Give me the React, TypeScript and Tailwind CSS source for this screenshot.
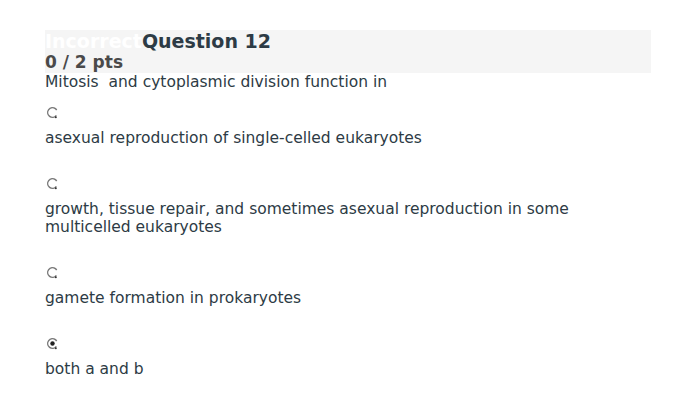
const options = [
  { text: "asexual reproduction of single-celled eukaryotes", checked: false },
  {
    text: "growth, tissue repair, and sometimes asexual reproduction in some multicelled eukaryotes",
    checked: false,
  },
  { text: "gamete formation in prokaryotes", checked: false },
  { text: "both a and b", checked: true },
];

// small native-looking radio, ring open on the right with a dark speck below
function Radio({ checked }: { checked: boolean }) {
  return (
    <svg width="13" height="13" viewBox="0 0 13 13" className="block">
      <circle cx="6.5" cy="6.5" r="4.8" fill="none" stroke="#7a7a7a" strokeWidth="1.5" strokeDasharray="24 6.2" transform="rotate(37 6.5 6.5)" />
      <circle cx="9.8" cy="11.3" r="1" fill="#333" />
      {checked && <circle cx="6.5" cy="6.5" r="2.2" fill="#222" />}
    </svg>
  );
}

export default function App() {
  return (
    <div className="w-[700px] h-[410px] bg-white px-[45px] pt-[30px] text-[#2d3b45]" style={{ fontFamily: "'DejaVu Sans', sans-serif" }}>
      {/* Header */}
      <div className="w-[606px] h-[43px] bg-[#f5f5f5]">
        <h2 className="text-[19px] leading-[22px] font-bold">
          <span className="text-white">Incorrect</span>Question 12
        </h2>
        <div className="text-[17px] leading-[21px] font-bold text-[#4a4a4a]">0 / 2 pts</div>
      </div>

      <div className="w-[606px]">
        <p className="text-[15.5px] leading-[18px] whitespace-pre">Mitosis  and cytoplasmic division function in</p>
        <div className="mt-[15px]">
          {options.map((o, i) => (
            <div key={i} className="mb-[30px]">
              <div className="pl-[1px] h-[12px]">
                <Radio checked={o.checked} />
              </div>
              <div className="mt-[11px] text-[15.5px] leading-[18px]">{o.text}</div>
            </div>
          ))}
        </div>
      </div>
    </div>
  );
}
